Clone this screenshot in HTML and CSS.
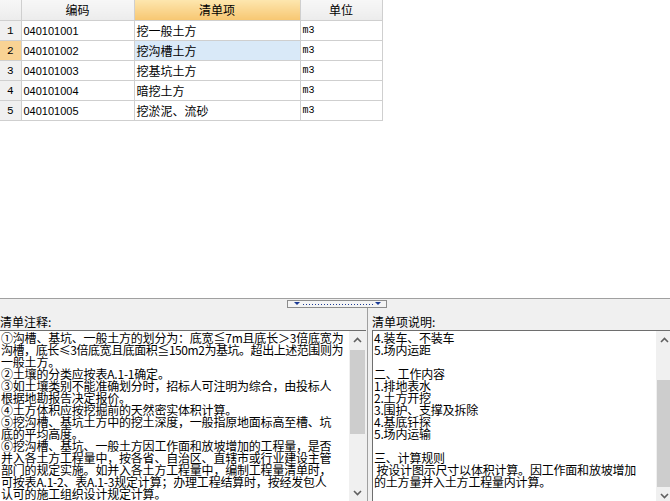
FILE: index.html
```html
<!DOCTYPE html>
<html lang="zh">
<head>
<meta charset="utf-8">
<link rel="stylesheet" href="styles.css">
</head>
<body>
<div class="app">
  <div class="top">
    <table class="grid">
      <colgroup>
        <col class="c-num"><col class="c-code"><col class="c-name"><col class="c-unit">
      </colgroup>
      <thead>
        <tr><th class="corner"></th><th>编码</th><th class="sorted">清单项</th><th>单位</th></tr>
      </thead>
      <tbody>
        <tr><td class="num">1</td><td class="code">040101001</td><td class="name">挖一般土方</td><td class="unit">m3</td></tr>
        <tr><td class="num active">2</td><td class="code">040101002</td><td class="name selected">挖沟槽土方</td><td class="unit">m3</td></tr>
        <tr><td class="num">3</td><td class="code">040101003</td><td class="name">挖基坑土方</td><td class="unit">m3</td></tr>
        <tr><td class="num">4</td><td class="code">040101004</td><td class="name">暗挖土方</td><td class="unit">m3</td></tr>
        <tr><td class="num">5</td><td class="code">040101005</td><td class="name">挖淤泥、流砂</td><td class="unit">m3</td></tr>
      </tbody>
    </table>
  </div>
  <div class="splitter">
    <div class="grip">
      <svg width="98" height="6" viewBox="0 0 98 6">
        <polygon points="6,1 12,1 9,4" fill="#1b3a94"/>
        <line x1="15" y1="3.5" x2="85" y2="3.5" stroke="#1b3a94" stroke-width="1" stroke-dasharray="1 2"/>
        <polygon points="87,1 93,1 90,4" fill="#1b3a94"/>
      </svg>
    </div>
  </div>
  <div class="bottom">
    <section class="panel panel-left">
      <div class="label">清单注释:</div>
      <div class="box">
        <div class="text">
          <div class="ln">①沟槽、基坑、一般土方的划分为：底宽≦7m且底长＞3倍底宽为</div>
          <div class="ln tight">沟槽，底长≤3倍底宽且底面积≦150m2为基坑。超出上述范围则为</div>
          <div class="ln">一般土方。</div>
          <div class="ln">②土壤的分类应按表A.1-1确定。</div>
          <div class="ln">③如土壤类别不能准确划分时，招标人可注明为综合，由投标人</div>
          <div class="ln">根据地勘报告决定报价。</div>
          <div class="ln">④土方体积应按挖掘前的天然密实体积计算。</div>
          <div class="ln">⑤挖沟槽、基坑土方中的挖土深度，一般指原地面标高至槽、坑</div>
          <div class="ln">底的平均高度。</div>
          <div class="ln">⑥挖沟槽、基坑、一般土方因工作面和放坡增加的工程量，是否</div>
          <div class="ln">并入各土方工程量中，按各省、自治区、直辖市或行业建设主管</div>
          <div class="ln">部门的规定实施。如并入各土方工程量中，编制工程量清单时，</div>
          <div class="ln">可按表A.1-2、表A.1-3规定计算；办理工程结算时，按经发包人</div>
          <div class="ln">认可的施工组织设计规定计算。</div>
        </div>
        <div class="vscroll">
          <div class="arrow up"><svg width="9" height="6" viewBox="0 0 9 6"><polyline points="1,5 4.5,1.5 8,5" fill="none" stroke="#606060" stroke-width="1.6"/></svg></div>
          <div class="track"><div class="thumb thumb-left"></div></div>
          <div class="arrow down"><svg width="9" height="6" viewBox="0 0 9 6"><polyline points="1,1 4.5,4.5 8,1" fill="none" stroke="#606060" stroke-width="1.6"/></svg></div>
        </div>
      </div>
    </section>
    <div class="divider"></div>
    <section class="panel panel-right">
      <div class="label">清单项说明:</div>
      <div class="box">
        <div class="text">
          <div class="ln">4.装车、不装车</div>
          <div class="ln">5.场内运距</div>
          <div class="ln">&nbsp;</div>
          <div class="ln">二、工作内容</div>
          <div class="ln">1.排地表水</div>
          <div class="ln">2.土方开挖</div>
          <div class="ln">3.围护、支撑及拆除</div>
          <div class="ln">4.基底钎探</div>
          <div class="ln">5.场内运输</div>
          <div class="ln">&nbsp;</div>
          <div class="ln">三、计算规则</div>
          <div class="ln">&nbsp;按设计图示尺寸以体积计算。因工作面和放坡增加</div>
          <div class="ln">的土方量并入土方工程量内计算。</div>
        </div>
        <div class="vscroll">
          <div class="arrow up"><svg width="9" height="6" viewBox="0 0 9 6"><polyline points="1,5 4.5,1.5 8,5" fill="none" stroke="#606060" stroke-width="1.6"/></svg></div>
          <div class="track"><div class="thumb thumb-right"></div></div>
          <div class="arrow down"><svg width="9" height="6" viewBox="0 0 9 6"><polyline points="1,1 4.5,4.5 8,1" fill="none" stroke="#606060" stroke-width="1.6"/></svg></div>
        </div>
      </div>
    </section>
  </div>
</div>
</body>
</html>
```
FILE: styles.css
```css
html, body {
  margin: 0;
  padding: 0;
  background: #ffffff;
  overflow: hidden;
}
body {
  width: 670px;
  height: 501px;
  font-family: "Noto Sans CJK SC", "Liberation Sans", sans-serif;
  font-size: 12px;
  color: #000;
}
.app {
  display: flex;
  flex-direction: column;
  width: 670px;
  height: 501px;
  overflow: hidden;
}
.top {
  height: 298px;
  background: #fff;
  border-bottom: 1px solid #a0a0a0;
  flex: none;
}
.grid {
  border-collapse: collapse;
  table-layout: fixed;
  width: 382px;
}
.c-num { width: 21px; }
.c-code { width: 113px; }
.c-name { width: 166px; }
.c-unit { width: 82px; }
.grid th, .grid td {
  border: 1px solid #cfcfcf;
  padding: 0;
  white-space: nowrap;
  overflow: hidden;
}
.grid tr > *:first-child { border-left: none; }
.grid thead tr > * { border-top: none; }
.grid th {
  height: 20px;
  font-weight: normal;
  font-size: 12px;
  line-height: 20px;
  background: linear-gradient(#f7f7f7, #ececec);
  color: #000;
  text-align: center;
}
.grid th.sorted {
  background: linear-gradient(#fde6ae, #f7c772);
}
.grid td {
  height: 18px;
  line-height: 18px;
}
.grid td.num {
  background: #f0f0f0;
  text-align: center;
  font-family: "Liberation Mono", monospace;
  font-size: 11px;
}
.grid td.num.active {
  background: #f9d394;
}
.grid td.code {
  font-family: "Liberation Sans", sans-serif;
  font-size: 11px;
  padding-left: 2px;
}
.grid td.name {
  padding-left: 2px;
}
.grid td.name.selected {
  background: #d9e9f8;
}
.grid td.unit {
  font-family: "Liberation Mono", monospace;
  font-size: 10px;
  line-height: 19px;
  padding-left: 2px;
}
.splitter {
  height: 9px;
  flex: none;
  background: #f0f0f0;
  display: flex;
  align-items: flex-start;
  padding-left: 287px;
  padding-top: 1px;
  box-sizing: border-box;
}
.grip {
  width: 98px;
  height: 6px;
  border: 1px solid #8c8c8c;
  background: #f4f4f4;
  display: flex;
}
.bottom {
  flex: 1;
  display: flex;
  background: #f0f0f0;
  width: 673px;
  min-height: 0;
}
.panel {
  display: flex;
  flex-direction: column;
  min-width: 0;
}
.panel-left { width: 366px; flex: none; }
.panel-right { flex: 1; }
.divider {
  width: 5px;
  flex: none;
  border-left: 1px solid #a0a0a0;
  margin-left: 1px;
  box-sizing: border-box;
}
.label {
  height: 22px;
  line-height: 22px;
  padding-top: 3px;
  box-sizing: border-box;
  flex: none;
}
.box {
  flex: 1;
  display: flex;
  background: #fff;
  border-top: 1px solid #6e6e6e;
  border-left: 1px solid #6e6e6e;
  min-height: 0;
  overflow: hidden;
}
.panel-left .box { border-left: none; }
.text {
  flex: 1;
  padding: 1px 0 0 1px;
  line-height: 12px;
  letter-spacing: -0.2px;
  overflow: hidden;
  min-width: 0;
}
.ln {
  white-space: pre;
  height: 12px;
}
.ln.tight {
  letter-spacing: -0.45px;
}
.vscroll {
  width: 17px;
  flex: none;
  background: #f0f0f0;
  display: flex;
  flex-direction: column;
}
.arrow {
  height: 17px;
  display: flex;
  align-items: center;
  justify-content: center;
  flex: none;
}
.track {
  flex: 1;
  display: flex;
  flex-direction: column;
}
.thumb {
  background: #cdcdcd;
  margin: 0 1px;
}
.thumb-left { margin-top: 2px; height: 84px; }
.thumb-right { margin-top: 32px; height: 107px; }
```
